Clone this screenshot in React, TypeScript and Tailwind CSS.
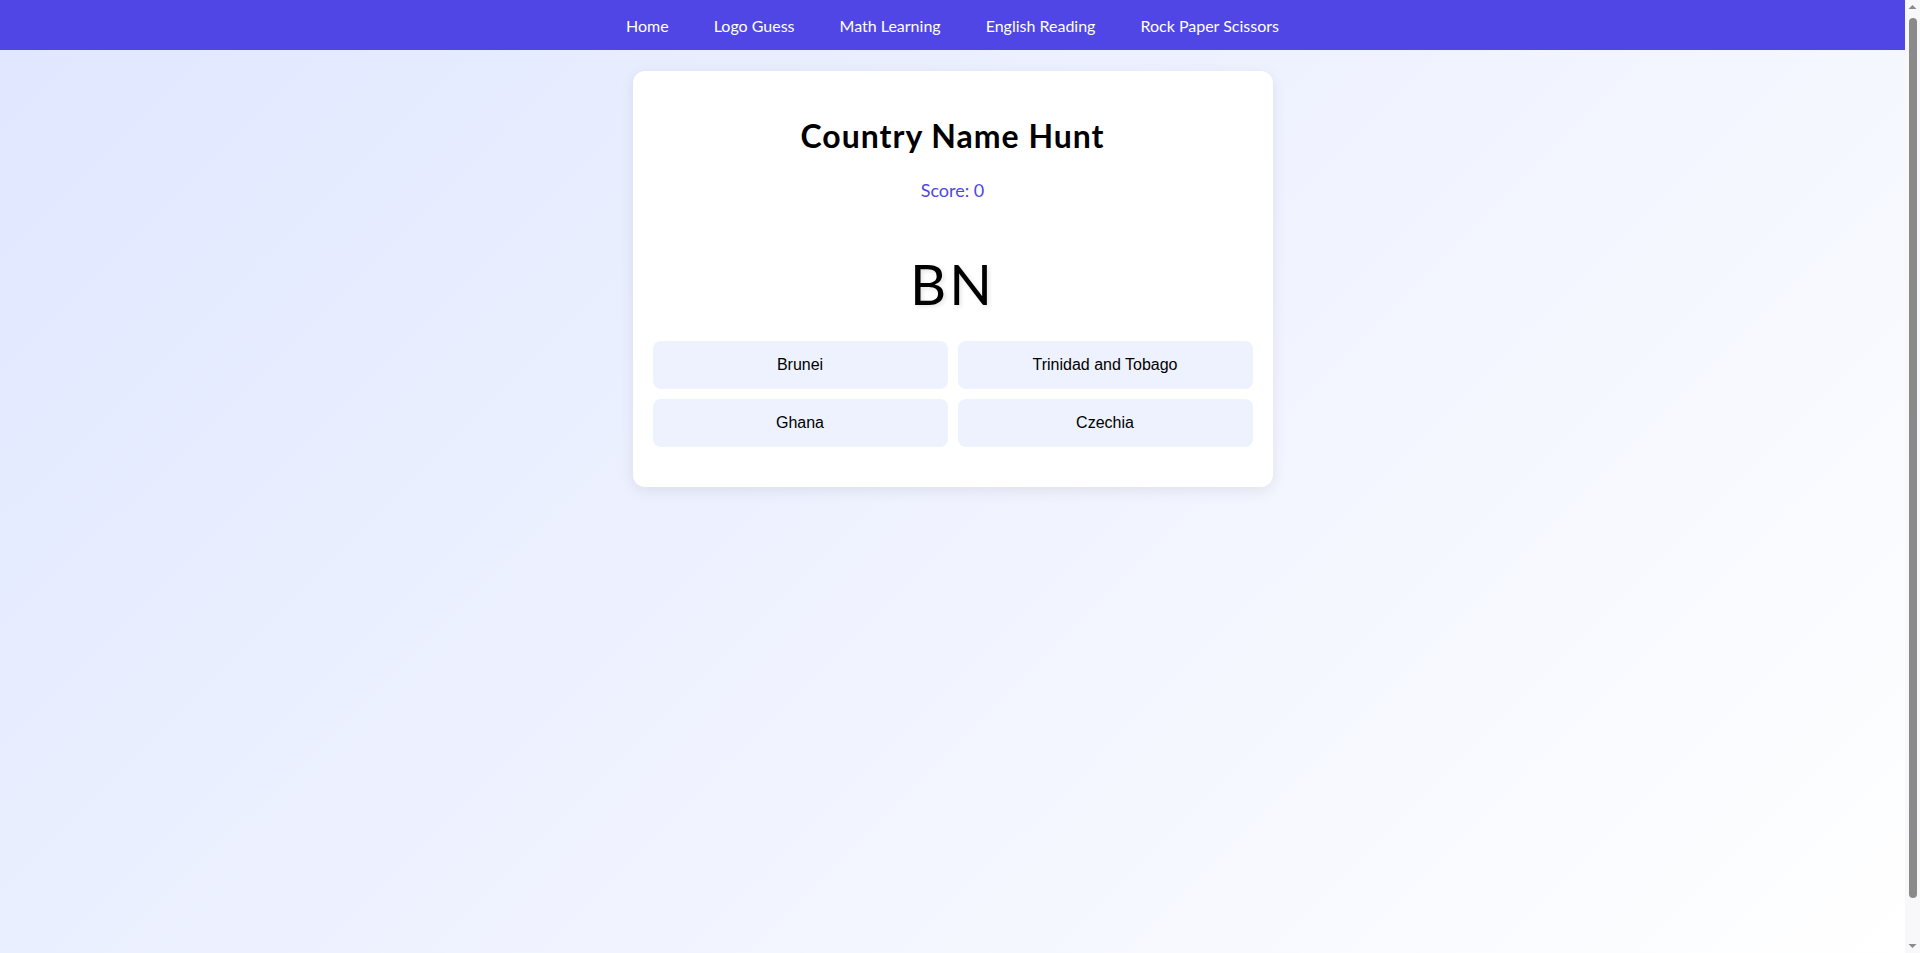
import React from "react";

const links = ["Home", "Logo Guess", "Math Learning", "English Reading", "Rock Paper Scissors"];
const options = ["Brunei", "Trinidad and Tobago", "Ghana", "Czechia"];

function Scrollbar() {
  return (
    <div className="w-[15px] h-screen shrink-0 bg-[#f8f8fa] flex flex-col items-center">
      <svg width="15" height="14" viewBox="0 0 15 14" className="shrink-0">
        <path d="M3.5 9 L7.5 5 L11.5 9 Z" fill="#8a8a8a" />
      </svg>
      <div className="mt-[4px] w-[8px] h-[880px] rounded-full bg-[#8a8a8a]" />
      <div className="flex-1" />
      <svg width="15" height="14" viewBox="0 0 15 14" className="shrink-0">
        <path d="M3.5 5 L7.5 9 L11.5 5 Z" fill="#8a8a8a" />
      </svg>
    </div>
  );
}

export default function App() {
  return (
    <div className="flex h-screen overflow-hidden font-['Lato',sans-serif]">
      <div className="flex-1 flex flex-col min-w-0">
        <nav className="h-[50px] shrink-0 bg-[#4f46e5] flex items-center justify-center gap-[45px] pt-[2px] text-white text-[16px] leading-[1.2]">
          {links.map((l) => (
            <a key={l} href="#" className="text-white no-underline">
              {l}
            </a>
          ))}
        </nav>
        <main className="flex-1 bg-[linear-gradient(135deg,#e0e7ff_0%,#ffffff_100%)] pt-[21px]">
          <div className="mx-auto w-[640px] bg-white rounded-xl shadow-[0_4px_15px_rgba(0,0,0,0.08)] px-5 pt-[46px] pb-10">
            <h1 className="text-center text-[32px] font-bold leading-[1.2] tracking-[1px] text-black">
              Country Name Hunt
            </h1>
            <p className="mt-[25px] text-center text-[18px] leading-[1.2] text-[#4f46e5]">Score: 0</p>
            <div className="mt-[48px] text-center text-[56px] leading-[1.2] tracking-[3px] text-black [text-shadow:2px_2px_4px_rgba(0,0,0,0.1)]">
              BN
            </div>
            <div className="mt-[24px] grid grid-cols-2 gap-[10px]">
              {options.map((o) => (
                <button
                  key={o}
                  className="h-[48px] rounded-lg bg-[#eef2ff] text-[16px] text-black font-['Liberation_Sans',Arial,sans-serif] flex items-center justify-center cursor-pointer"
                >
                  {o}
                </button>
              ))}
            </div>
          </div>
        </main>
      </div>
      <Scrollbar />
    </div>
  );
}
